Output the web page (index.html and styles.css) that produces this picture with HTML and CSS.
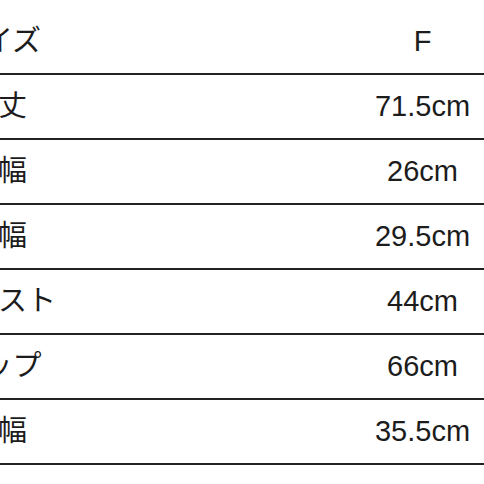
FILE: index.html
```html
<!DOCTYPE html>
<html lang="ja">
<head>
<meta charset="utf-8">
<link rel="stylesheet" href="styles.css">
</head>
<body>
<div class="sheet">
  <div class="size-table">
    <div class="row"><div class="label">サイズ</div><div class="value">F</div></div>
    <div class="row"><div class="label">着丈</div><div class="value">71.5cm</div></div>
    <div class="row"><div class="label">肩幅</div><div class="value">26cm</div></div>
    <div class="row"><div class="label">身幅</div><div class="value">29.5cm</div></div>
    <div class="row"><div class="label">ウエスト</div><div class="value">44cm</div></div>
    <div class="row"><div class="label">ヒップ</div><div class="value">66cm</div></div>
    <div class="row"><div class="label">裾幅</div><div class="value">35.5cm</div></div>
  </div>
</div>
</body>
</html>
```
FILE: styles.css
```css
html, body {
  margin: 0;
  padding: 0;
  background: #ffffff;
}
body {
  width: 484px;
  height: 484px;
  overflow: hidden;
  font-family: "Liberation Sans", "Noto Sans CJK JP", sans-serif;
  color: #1c1c1c;
}
.sheet {
  padding-top: 10px;
}
.size-table {
  margin-left: -128px;
  width: 849px;
  display: flex;
  flex-direction: column;
}
.row {
  display: grid;
  grid-template-columns: 252px 597px;
  height: 63px;
  align-items: center;
  border-bottom: 2px solid #222222;
}
.label, .value {
  text-align: center;
  font-size: 29px;
  line-height: 1;
}
```
